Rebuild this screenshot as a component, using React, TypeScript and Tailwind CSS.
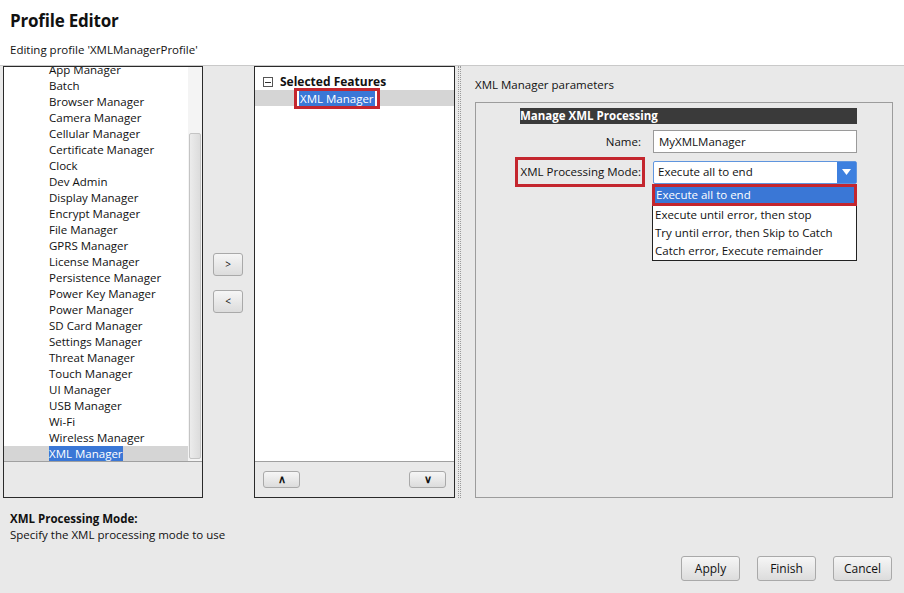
import React from 'react';

const FEATURES = [
  'App Manager', 'Batch', 'Browser Manager', 'Camera Manager', 'Cellular Manager',
  'Certificate Manager', 'Clock', 'Dev Admin', 'Display Manager', 'Encrypt Manager',
  'File Manager', 'GPRS Manager', 'License Manager', 'Persistence Manager',
  'Power Key Manager', 'Power Manager', 'SD Card Manager', 'Settings Manager',
  'Threat Manager', 'Touch Manager', 'UI Manager', 'USB Manager', 'Wi-Fi',
  'Wireless Manager', 'XML Manager',
];

const MODES = [
  'Execute all to end',
  'Execute until error, then stop',
  'Try until error, then Skip to Catch',
  'Catch error, Execute remainder',
];

const btn =
  'border border-[#a9a9a9] rounded-[3px] bg-gradient-to-b from-[#f6f6f6] to-[#dcdcdc] text-[#111] flex items-center justify-center';

export default function App() {
  return (
    <div className="w-[904px] h-[593px] bg-[#e9e9e9] flex flex-col text-[12px] text-[#111] font-['Open_Sans','Noto_Sans',sans-serif] overflow-hidden">
      {/* header */}
      <div className="h-[66px] bg-white border-b border-[#c9c9c9] px-[10px] flex flex-col shrink-0">
        <div className="text-[17px] font-bold leading-none pt-[12px] tracking-[-0.2px]">Profile Editor</div>
        <div className="text-[11.5px] leading-none pt-[15px]">Editing profile 'XMLManagerProfile'</div>
      </div>

      {/* body */}
      <div className="h-[432px] flex shrink-0 pl-[3px]">
        {/* feature list */}
        <div className="w-[200px] border border-[#2a2a2a] flex flex-col bg-[#e9e9e9]">
          <div className="h-[395px] flex bg-white overflow-hidden border-b border-[#a0a0a0]">
            <div className="flex-1 overflow-hidden">
              <div className="mt-[-5px]">
                {FEATURES.map((f) => {
                  const sel = f === 'XML Manager';
                  return (
                    <div key={f} className={`h-[16px] flex items-center pl-[45px] text-[11.5px] ${sel ? 'bg-[#d5d5d5]' : ''}`}>
                      <span className={`leading-[16px] ${sel ? 'bg-[#3a77d6] text-white' : ''}`}>{f}</span>
                    </div>
                  );
                })}
              </div>
            </div>
            <div className="w-[14px] bg-[#f4f4f4] flex flex-col pt-[66px] pb-[2px] px-[1px]">
              <div className="flex-1 border border-[#c4c4c4] rounded-[2px] bg-gradient-to-r from-[#ececec] to-[#dcdcdc]" />
            </div>
          </div>
        </div>

        {/* move buttons */}
        <div className="w-[51px] flex flex-col pl-[10px] pt-[187px] gap-[14px]">
          <button className={`${btn} w-[30px] h-[23px] text-[10px]`}>&gt;</button>
          <button className={`${btn} w-[30px] h-[23px] text-[10px]`}>&lt;</button>
        </div>

        {/* selected features */}
        <div className="w-[201px] border border-[#2a2a2a] flex flex-col">
          <div className="h-[395px] bg-white border-b border-[#a0a0a0] pt-[7px]">
            <div className="h-[16px] flex items-center pl-[8px] gap-[7px]">
              <span className="w-[10px] h-[10px] border border-[#555] flex items-center justify-center">
                <span className="w-[6px] h-px bg-[#333]" />
              </span>
              <span className="font-bold text-[12px]">Selected Features</span>
            </div>
            <div className="h-[16px] bg-[#d5d5d5] flex items-center pl-[39px]">
              <span className="border-[3px] border-[#c4262e] px-[2px] bg-white">
                <span className="bg-[#3a77d6] text-white text-[11.5px] leading-[15px] block px-[1px]">XML Manager</span>
              </span>
            </div>
          </div>
          <div className="flex-1 flex items-center justify-between px-[8px]">
            <button className={`${btn} w-[37px] h-[17px] text-[11px] font-bold`}>∧</button>
            <button className={`${btn} w-[37px] h-[17px] text-[11px] font-bold`}>∨</button>
          </div>
        </div>

        {/* splitter */}
        <div className="w-[8px] flex justify-center">
          <div className="w-[3px] h-full border-x border-dotted border-[#9a9a9a]" />
        </div>

        {/* parameters */}
        <div className="flex-1 flex flex-col pl-[12px] pr-[11px]">
          <div className="h-[36px] flex items-center pt-[2px] text-[11.5px]">XML Manager parameters</div>
          <div className="flex-1 border border-[#9c9c9c] pt-[5px] pl-[44px]">
            <div className="w-[337px] flex flex-col">
              <div className="h-[16px] bg-[#3a3a3a] text-white font-bold text-[11.5px] flex items-center leading-none">
                Manage XML Processing
              </div>
              <div className="flex items-center mt-[6px] h-[23px]">
                <div className="w-[121px] text-right text-[11.5px]">Name:</div>
                <div className="ml-[12px] w-[204px] h-[23px] bg-white border border-[#9a9a9a] flex items-center pl-[5px] text-[11.5px]">
                  MyXMLManager
                </div>
              </div>
              <div className="flex items-center mt-[4px] relative">
                <div className="w-[130px] ml-[-5px] h-[30px] border-[3px] border-[#c4262e] flex items-center justify-end pr-[1px] text-[11.5px] whitespace-nowrap">
                  XML Processing Mode:
                </div>
                <div className="ml-[8px] w-[204px] h-[23px] bg-white border border-[#5f95de] rounded-[2px] flex items-center text-[11.5px]">
                  <div className="flex-1 pl-[4px]">Execute all to end</div>
                  <div className="w-[19px] h-full bg-[#3d80df] flex items-center justify-center">
                    <svg width="9" height="6" viewBox="0 0 9 6"><path d="M0 0h9L4.5 6z" fill="#fff" /></svg>
                  </div>
                </div>
                <div className="absolute left-[132px] top-[27px] w-[205px] bg-white border border-[#222] flex flex-col text-[11.5px]">
                  {MODES.map((m, i) =>
                    i === 0 ? (
                      <div key={m} className="h-[22px] border-[3px] border-[#c4262e] bg-[#3a77d6] text-white flex items-center pl-[1px] mx-[-1px] mt-[-1px]">
                        {m}
                      </div>
                    ) : (
                      <div key={m} className="h-[18px] flex items-center pl-[2px]">{m}</div>
                    )
                  )}
                </div>
              </div>
            </div>
          </div>
        </div>
      </div>

      {/* footer */}
      <div className="flex-1 flex flex-col px-[10px]">
        <div className="pt-[13px] font-bold text-[11.5px] leading-[16px]">XML Processing Mode:</div>
        <div className="text-[11.5px] leading-[16px]">Specify the XML processing mode to use</div>
        <div className="flex justify-end gap-[17px] mt-[13px] pr-[2px]">
          {['Apply', 'Finish', 'Cancel'].map((b) => (
            <button key={b} className={`${btn} w-[59px] h-[25px] text-[12px]`}>{b}</button>
          ))}
        </div>
      </div>
    </div>
  );
}
